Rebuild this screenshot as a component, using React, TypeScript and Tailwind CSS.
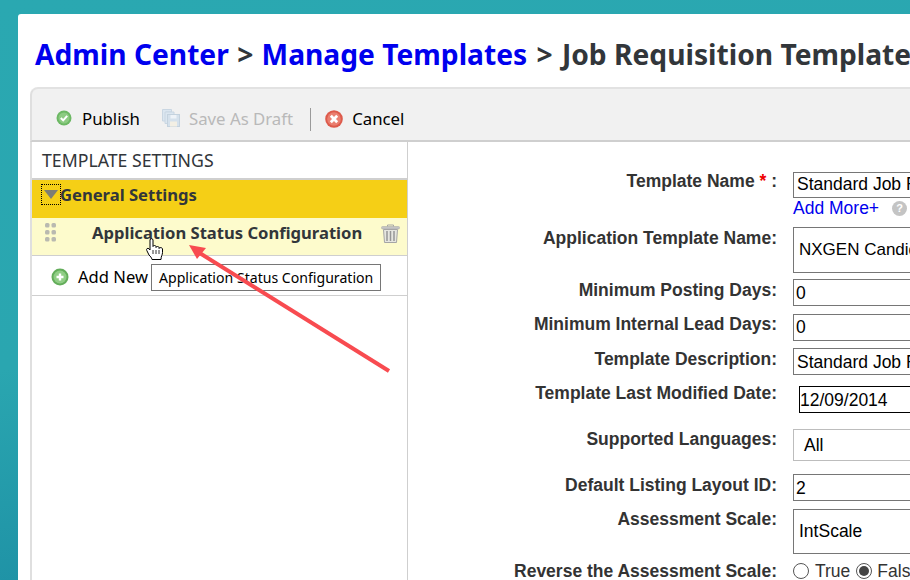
const labelClass = "font-['Liberation_Sans',sans-serif] text-[17.500px] font-bold text-[#333] whitespace-nowrap"
const inputClass = "h-full w-[200px] border border-[#767676] bg-white flex items-center font-['Liberation_Sans',sans-serif] text-[17.500px] text-black whitespace-nowrap overflow-hidden"

const PublishIcon = () => (
  <svg width="16" height="16" viewBox="0 0 16 16" className="-translate-y-[1px]">
    <circle cx="8" cy="8" r="7.5" fill="#6cb864" />
    <circle cx="8" cy="8" r="5.500" fill="#8ccb82" />
    <path d="M4.800 8 7.200 10.400 11.200 5.800" fill="none" stroke="#fff" strokeWidth="2" />
  </svg>
)

const DraftIcon = () => (
  <svg width="18" height="18" viewBox="0 0 18 18" className="-translate-y-[1px]">
    <path d="M0.500 0.500h9v2.500H4v9H0.500z" fill="#dbe6f0" stroke="#c9d6e2" />
    <path d="M3 3h9v2.500H6.500v9H3z" fill="#dbe6f0" stroke="#c9d6e2" />
    <rect x="5.500" y="5.500" width="12" height="12" fill="#d5e1ec" stroke="#c4d2de" />
    <rect x="8.500" y="6" width="6" height="3.500" fill="#eef3f8" />
    <rect x="8" y="12.500" width="7" height="5" fill="#f3efe4" />
  </svg>
)

const CancelIcon = () => (
  <svg width="18" height="18" viewBox="0 0 18 18">
    <circle cx="9" cy="9" r="8.800" fill="#dd5a4b" />
    <circle cx="9" cy="9" r="6.800" fill="#ea7f70" />
    <path d="M5.800 5.800 12.200 12.200M12.200 5.800 5.800 12.200" stroke="#fff" strokeWidth="2.800" />
  </svg>
)

const PlusIcon = () => (
  <svg width="18" height="18" viewBox="0 0 18 18">
    <circle cx="9" cy="9" r="8.500" fill="#63ad5a" />
    <circle cx="9" cy="9" r="6.500" fill="#90cd85" />
    <path d="M9 5.500v7M5.500 9h7" stroke="#fff" strokeWidth="2.400" />
  </svg>
)

const GripIcon = () => (
  <svg width="11" height="19" viewBox="0 0 11 19">
    {[0, 7, 14].map((y) =>
      [0, 6.500].map((x) => <rect key={`${x}-${y}`} x={x} y={y} width="4.500" height="4.500" rx="1.500" fill="#b9b9b0" />)
    )}
  </svg>
)

const TrashIcon = () => (
  <svg width="19" height="19" viewBox="0 0 19 19">
    <path d="M6.500 2.500V1h6v1.500" fill="none" stroke="#a5a5a5" />
    <rect x="0.500" y="2.500" width="18" height="2.500" rx="1" fill="#c4c4c4" stroke="#a5a5a5" strokeWidth=".5" />
    <path d="M2.500 5.500h14l-1 13h-12z" fill="#e6e6e0" stroke="#a5a5a5" />
    <path d="M6 7v10M9.500 7v10M13 7v10" stroke="#969696" strokeWidth="1.500" />
  </svg>
)

const HelpIcon = () => (
  <div className="flex h-[15px] w-[15px] items-center justify-center rounded-full bg-[#c4c4c4] font-['Liberation_Sans',sans-serif] text-[11px] font-bold leading-none text-white">
    ?
  </div>
)

const HandCursor = () => (
  <svg width="18" height="22" viewBox="0 0 18 22" className="absolute left-[146px] top-[238px]">
    <path
      d="M4 2c0-1.800 3-1.800 3 0v6.500c0-1.300 3-1.300 3 0v1c0-1.300 3-1.300 3 0v1c0-1.300 3.500-1.200 3.500.5v3.500c0 2.500-1.500 3.500-1.500 7H6c-.5-2-1.500-3-3-4.500L.800 12.500c-1-1.700 1-2.900 2.200-1.700L4 12z"
      fill="#fff"
      stroke="#000"
      strokeWidth="1"
    />
    <path d="M7 12v4M10 12v4M13 12v4" stroke="#000" strokeWidth=".8" />
  </svg>
)

const Arrow = () => (
  <svg width="910" height="580" viewBox="0 0 910 580" className="absolute left-0 top-0 pointer-events-none">
    <path d="M389 371 198 252" stroke="#f84b50" strokeWidth="4" fill="none" />
    <path d="M189 245 206 248 197 259z" fill="#f84b50" />
  </svg>
)

const FormRow = ({ label, className, children }: { label: React.ReactNode; className: string; children: React.ReactNode }) => (
  <div className={`flex items-start ${className}`}>
    <div className={`${labelClass} w-[385px] pr-[16px] text-right`}>{label}</div>
    {children}
  </div>
)

export default function App() {
  return (
    <div className="relative h-[580px] w-[910px] overflow-hidden bg-[linear-gradient(170deg,#2aa8b1_0%,#2aa6b0_50%,#17859f_100%)] pl-[18px] pt-[14px]">
      <div className="h-[600px] w-[960px] rounded-tl-[3px] bg-white pl-[12px] pt-[22px]">
        <h1 className="h-[51px] whitespace-nowrap pl-[5px] font-['Noto_Sans',sans-serif] text-[28.200px] font-bold leading-[36px] text-[#32363a]">
          <span className="text-[#0000ee]">Admin Center</span>
          <span className="mx-[1px]"> &gt; </span>
          <span className="text-[#0000ee]">Manage Templates</span>
          <span className="mx-[2px]"> &gt; </span>
          Job Requisition Template
        </h1>

        <div className="flex h-[55px] items-center rounded-tl-[8px] border-b-2 border-l-2 border-t-2 border-b-[#cfcfcf] border-l-[#dfdfdf] border-t-[#e2e2e2] bg-[#f1f1f1] pl-[24px] pt-[9px] font-['Noto_Sans',sans-serif] text-[16.800px] text-black">
          <PublishIcon />
          <span className="ml-[10px]">Publish</span>
          <div className="ml-[22px]"><DraftIcon /></div>
          <span className="ml-[9px] text-[#b9b9b9]">Save As Draft</span>
          <div className="ml-[17px] h-[23px] w-px bg-[#9a9a9a]" />
          <div className="ml-[14px]"><CancelIcon /></div>
          <span className="ml-[9px]">Cancel</span>
        </div>

        <div className="flex h-[460px]">
          <div className="w-[378px] shrink-0 border-l-2 border-r border-l-[#dfdfdf] border-r-[#cfcfcf] font-['Noto_Sans',sans-serif]">
            <div className="flex h-[38px] items-center border-b-2 border-[#cfcfcf] pl-[10px] text-[17.700px] text-[#32363a]">
              TEMPLATE SETTINGS
            </div>
            <div className="flex h-[38px] items-start bg-[#f5cf16] pl-[9px] pt-[4px]">
              <div className="flex h-[21px] w-[20px] items-center justify-center border border-dotted border-black">
                <svg width="14" height="9" viewBox="0 0 14 9"><path d="M0 0h14L7 9z" fill="#7e7e74" /></svg>
              </div>
              <span className="-ml-[1px] text-[16.600px] font-bold leading-[21px] text-[#32363a]">General Settings</span>
            </div>
            <div className="relative flex h-[38px] items-start border-b border-[#cfcfcf] bg-[#fdfbcc] pl-[13px] pt-[5px]">
              <GripIcon />
              <span className="ml-[36px] text-[16.600px] font-bold leading-[20px] text-[#32363a] whitespace-nowrap">Application Status Configuration</span>
              <div className="absolute left-[349px] top-[6px]"><TrashIcon /></div>
            </div>
            <div className="relative flex h-[40px] items-center border-b border-[#cfcfcf] pl-[19px] pt-[3px] text-[16.600px] text-black">
              <PlusIcon />
              <span className="ml-[9px]">Add New</span>
              <div className="absolute left-[119px] top-[8px] flex h-[27px] w-[230px] items-center border border-[#767676] bg-white pl-[7px] text-[14.100px] text-black whitespace-nowrap">
                Application Status Configuration
              </div>
            </div>
          </div>

          <div className="flex-1 pt-[30px]">
            <FormRow label={<span>Template Name <span className="text-[#e00]">*</span> :</span>} className="h-[26px] leading-[18px]">
              <div className={`${inputClass} pb-[2px] pl-[3px]`}>Standard Job Requisition</div>
            </FormRow>
            <div className="flex h-[29px] items-center pb-[8px] pl-[385px]">
              <span className="font-['Liberation_Sans',sans-serif] text-[17.500px] text-[#0000ee]">Add More+</span>
              <div className="ml-[13px]"><HelpIcon /></div>
            </div>
            <FormRow label="Application Template Name:" className="h-[46px] leading-[22px]">
              <div className={`${inputClass} pl-[5px] text-[17px]`}>NXGEN Candidate</div>
            </FormRow>
            <FormRow label="Minimum Posting Days:" className="mt-[6px] h-[27px] leading-[22px]">
              <div className={`${inputClass} pl-[2px]`}>0</div>
            </FormRow>
            <FormRow label="Minimum Internal Lead Days:" className="mt-[8px] h-[27px] leading-[20px]">
              <div className={`${inputClass} pb-[2px] pl-[2px]`}>0</div>
            </FormRow>
            <FormRow label="Template Description:" className="mt-[7px] h-[27px] leading-[22px]">
              <div className={`${inputClass} pl-[3px]`}>Standard Job Requisition</div>
            </FormRow>
            <FormRow label="Template Last Modified Date:" className="mt-[11px] h-[27px] leading-[14px]">
              <div className={`${inputClass} ml-[6px] border-black pl-0`}>12/09/2014</div>
            </FormRow>
            <FormRow label="Supported Languages:" className="mt-[16px] h-[32px] leading-[20px]">
              <div className={`${inputClass} border-[#bdbdbd] pl-[10px]`}>All</div>
            </FormRow>
            <FormRow label="Default Listing Layout ID:" className="mt-[13px] h-[27px] leading-[22px]">
              <div className={`${inputClass} pl-[2px]`}>2</div>
            </FormRow>
            <FormRow label="Assessment Scale:" className="mt-[8px] h-[45px] leading-[20px]">
              <div className={`${inputClass} pb-[2px] pl-[5px]`}>IntScale</div>
            </FormRow>
            <FormRow label="Reverse the Assessment Scale:" className="mt-[9px] h-[24px] leading-[16px]">
              <div className="flex items-center font-['Liberation_Sans',sans-serif] text-[17.500px] leading-[14px] text-[#333]">
                <div className="h-[16px] w-[16px] rounded-full border border-[#555] bg-white" />
                <span className="ml-[6px]">True</span>
                <div className="ml-[6px] flex h-[16px] w-[16px] items-center justify-center rounded-full border border-[#555] bg-white">
                  <div className="h-[10px] w-[10px] rounded-full bg-[#444]" />
                </div>
                <span className="ml-[5px]">False</span>
              </div>
            </FormRow>
          </div>
        </div>
      </div>
      <Arrow />
      <HandCursor />
    </div>
  )
}
